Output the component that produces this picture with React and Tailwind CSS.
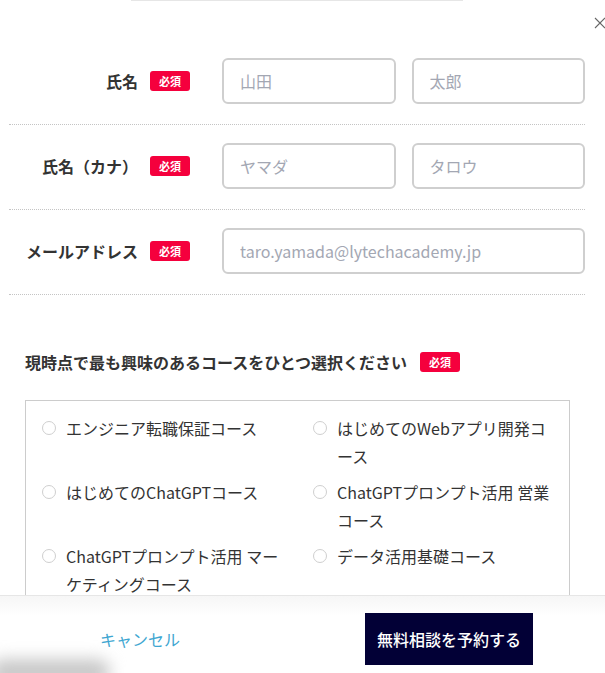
import React from "react";

const font = { fontFamily: '"Noto Sans CJK JP", "Noto Sans", sans-serif' };

const Badge = () => (
  <span className="inline-flex items-center justify-center w-10 h-5 rounded-[3px] bg-[#f5003d] text-white text-[11px] font-bold leading-none">
    必須
  </span>
);

const FormRow = ({ label, children }) => (
  <div className="flex items-center pt-[18px] pb-[20px] border-b border-dotted border-[#c4c4c4]">
    <div className="w-[213px] shrink-0 flex justify-end items-center gap-[12px] pr-[32px]">
      <span className="text-[16px] font-bold text-[#333]">{label}</span>
      <Badge />
    </div>
    <div className="flex flex-1 min-w-0 gap-4">{children}</div>
  </div>
);

const TextInput = ({ placeholder }) => (
  <input
    className="flex-1 w-0 min-w-0 h-[46px] rounded-[6px] border-2 border-[#cfcfcf] pl-[16px] text-[16px] text-[#333] placeholder:text-[#a3a7b3] outline-none"
    placeholder={placeholder}
    style={font}
  />
);

const courses = [
  "エンジニア転職保証コース",
  "はじめてのWebアプリ開発コース",
  "はじめてのChatGPTコース",
  "ChatGPTプロンプト活用 営業コース",
  "ChatGPTプロンプト活用 マーケティングコース",
  "データ活用基礎コース",
];

const App = () => {
  return (
    <div className="relative w-[605px] h-[673px] overflow-hidden bg-white" style={font}>
      {/* top edge line */}
      <div className="absolute top-0 left-[131px] w-[332px] h-px bg-[#e6e6e6]" />

      {/* close */}
      <button className="absolute top-[16px] right-[-2px] w-[13px] h-[13px] text-[#666]">
        <svg viewBox="0 0 12 12" className="w-[12px] h-[12px]" fill="none" stroke="currentColor" strokeWidth="1.1">
          <path d="M1 1 L11 11 M11 1 L1 11" />
        </svg>
      </button>

      <div className="pt-[40px]">
        {/* name rows */}
        <div className="mx-[9px] w-[576px]">
          <FormRow label="氏名">
            <TextInput placeholder="山田" />
            <TextInput placeholder="太郎" />
          </FormRow>
          <FormRow label="氏名（カナ）">
            <TextInput placeholder="ヤマダ" />
            <TextInput placeholder="タロウ" />
          </FormRow>
          <FormRow label="メールアドレス">
            <TextInput placeholder="taro.yamada@lytechacademy.jp" />
          </FormRow>
        </div>

        {/* course question */}
        <div className="px-[25px] mt-[55px] flex items-center gap-[13px]">
          <span className="text-[16px] leading-6 font-bold text-[#333]">
            現時点で最も興味のあるコースをひとつ選択ください
          </span>
          <Badge />
        </div>

        <div className="mx-[25px] mt-[26px] w-[545px] border border-[#cccccc] pt-[13px] px-[16px] pb-6">
          <div className="grid grid-cols-2 gap-x-[31px] gap-y-2">
            {courses.map((c) => (
              <label key={c} className="flex items-start gap-[10px] cursor-pointer">
                <span className="mt-[7px] w-[14px] h-[14px] shrink-0 rounded-full border border-[#cfcfcf] bg-white" />
                <span className="text-[16px] leading-[28px] text-[#333]">{c}</span>
              </label>
            ))}
          </div>
        </div>
      </div>

      {/* footer */}
      <div className="absolute left-0 right-0 top-[595px] bottom-0 bg-white border-t border-[#e6e6e6]">
        <div className="absolute left-0 right-0 top-0 h-[20px] bg-gradient-to-b from-[#f6f6f6] to-white" />
        <div className="relative flex items-center pt-[17px]">
          <button className="w-[280px] text-center text-[16px] text-[#3ea6d1]" style={font}>
            キャンセル
          </button>
          <button
            className="ml-[85px] w-[168px] h-[52px] bg-[#020036] text-white text-[16px] font-medium"
            style={font}
          >
            無料相談を予約する
          </button>
        </div>
      </div>

      {/* blurred floating blob bottom-left */}
      <div className="absolute left-[-10px] bottom-[-12px] w-[120px] h-[26px] rounded-full bg-[#c8c8c8] blur-[8px]" />
    </div>
  );
};

export default App;
